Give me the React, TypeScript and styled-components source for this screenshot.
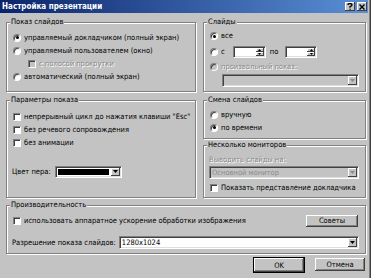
import React, { FC, ReactNode } from 'react';
import styled, { createGlobalStyle } from 'styled-components';

const FACE = '#c3c3c3';
const SHADOW = '#808080';
const DARK = '#404040';
const LIGHT = '#ffffff';

const GlobalStyle = createGlobalStyle`
  html, body {
    margin: 0;
    padding: 0;
    background: ${FACE};
  }
  body {
    color: #000;
    font-family: "DejaVu Sans Condensed", "Liberation Sans", Arial, sans-serif;
    font-size: 7.5px;
  }
`;

const Window = styled.div`
  background: ${FACE};
  box-shadow: inset -1px 0 0 ${DARK}, inset -2px 0 0 ${SHADOW};
  box-sizing: border-box;
  height: 278px;
  overflow: hidden;
  width: 371px;
`;

const TitleBar = styled.div`
  align-items: center;
  background: linear-gradient(to right, #0a246a, #5a8fd6);
  display: flex;
  height: 13px;
  margin-right: 3px;
  padding: 0 1px 0 2px;
`;

const Title = styled.span`
  color: #fff;
  flex: 1;
  font-size: 8px;
  font-weight: bold;
  line-height: 13px;
`;

const CaptionButton = styled.div`
  align-items: center;
  background: ${FACE};
  box-shadow: inset -1px -1px 0 ${DARK}, inset 1px 1px 0 ${LIGHT};
  display: flex;
  height: 9px;
  justify-content: center;
  margin-left: 2px;
  width: 10px;
`;

const Body = styled.div`
  display: flex;
  flex-direction: column;
  padding: 4px 5px 0 6px;
`;

const Columns = styled.div`
  column-gap: 7px;
  display: grid;
  grid-template-columns: 190px 1fr;
  grid-template-rows: 75px 103px;
  row-gap: 3px;
`;

const Stack = styled.div`
  display: flex;
  flex-direction: column;
  gap: 1px;
`;

const Group = styled.fieldset<{ $pad?: string; $height?: number; $grow?: boolean }>`
  border: 1px solid ${SHADOW};
  box-shadow: inset 1px 1px 0 ${LIGHT}, 1px 1px 0 ${LIGHT};
  box-sizing: border-box;
  display: flex;
  flex: ${(p) => (p.$grow ? 1 : 'none')};
  flex-direction: column;
  height: ${(p) => (p.$height ? `${p.$height}px` : 'auto')};
  margin: 0;
  min-width: 0;
  padding: ${(p) => p.$pad ?? '4px 6px 0 6px'};
`;

const Legend = styled.legend`
  background: ${FACE};
  height: 10px;
  line-height: 10px;
  margin-left: -3px;
  padding: 0 1px;
`;

const Row = styled.div<{ $h?: number; $mt?: number; $indent?: number }>`
  align-items: center;
  display: flex;
  height: ${(p) => p.$h ?? 13}px;
  margin-top: ${(p) => p.$mt ?? 0}px;
  padding-left: ${(p) => p.$indent ?? 0}px;
  white-space: nowrap;
`;

const Text = styled.span<{ $disabled?: boolean; $ml?: number }>`
  color: ${(p) => (p.$disabled ? '#8a8a8a' : '#000')};
  line-height: 10px;
  margin-left: ${(p) => p.$ml ?? 0}px;
  text-shadow: ${(p) => (p.$disabled ? `1px 1px 0 ${LIGHT}` : 'none')};
`;

const RadioDot = styled.span<{ $checked?: boolean; $disabled?: boolean }>`
  align-items: center;
  background: ${(p) => (p.$disabled ? FACE : LIGHT)};
  border: 1px solid;
  border-color: ${SHADOW} ${LIGHT} ${LIGHT} ${SHADOW};
  border-radius: 50%;
  box-shadow: inset 1px 1px 0 ${DARK};
  box-sizing: border-box;
  display: flex;
  flex: none;
  height: 8px;
  justify-content: center;
  margin-right: 3px;
  width: 8px;

  &::after {
    background: #000;
    border-radius: 50%;
    content: '';
    display: ${(p) => (p.$checked ? 'block' : 'none')};
    height: 3px;
    width: 3px;
  }
`;

const CheckBox = styled.span<{ $disabled?: boolean }>`
  background: ${(p) => (p.$disabled ? FACE : LIGHT)};
  border: 1px solid;
  border-color: ${SHADOW} ${LIGHT} ${LIGHT} ${SHADOW};
  box-shadow: inset 1px 1px 0 ${DARK};
  box-sizing: border-box;
  flex: none;
  height: 8px;
  margin-right: 3px;
  width: 8px;
`;

const Sunken = styled.div<{ $w?: number; $h?: number; $ml?: number; $disabled?: boolean }>`
  background: ${(p) => (p.$disabled ? FACE : LIGHT)};
  border: 1px solid;
  border-color: ${SHADOW} ${LIGHT} ${LIGHT} ${SHADOW};
  box-shadow: inset 1px 1px 0 ${DARK}, inset -1px -1px 0 #dedede;
  box-sizing: border-box;
  display: flex;
  flex: ${(p) => (p.$w ? 'none' : 1)};
  height: ${(p) => p.$h ?? 13}px;
  margin-left: ${(p) => p.$ml ?? 0}px;
  padding: 1px;
  width: ${(p) => (p.$w ? `${p.$w}px` : 'auto')};
`;

const FieldValue = styled.span<{ $disabled?: boolean }>`
  color: ${(p) => (p.$disabled ? '#8a8a8a' : '#000')};
  flex: 1;
  line-height: 9px;
  overflow: hidden;
  padding-left: 1px;
  white-space: nowrap;
`;

const Swatch = styled.span<{ $color: string }>`
  background: ${(p) => p.$color};
  flex: 1;
  margin: 1px 2px 1px 1px;
`;

const ArrowBox = styled.span`
  align-items: center;
  background: ${FACE};
  box-shadow: inset -1px -1px 0 ${DARK}, inset 1px 1px 0 ${LIGHT};
  display: flex;
  flex: none;
  justify-content: center;
  width: 9px;
`;

const SpinColumn = styled.span`
  display: flex;
  flex: none;
  flex-direction: column;
  margin-left: auto;
  width: 8px;
`;

const SpinButton = styled.span`
  align-items: center;
  background: ${FACE};
  box-shadow: inset -1px -1px 0 ${DARK}, inset 1px 1px 0 ${LIGHT};
  display: flex;
  flex: 1;
  justify-content: center;
`;

const Button = styled.div<{ $default?: boolean; $w?: number }>`
  align-items: center;
  background: ${FACE};
  border: 1px solid ${(p) => (p.$default ? '#000' : 'transparent')};
  box-shadow: inset -1px -1px 0 ${DARK}, inset 1px 1px 0 ${LIGHT}, inset -2px -2px 0 ${SHADOW};
  box-sizing: border-box;
  display: flex;
  height: ${(p) => (p.$default ? 16 : 15)}px;
  justify-content: center;
  width: ${(p) => p.$w ?? 52}px;
`;

const ButtonBar = styled.div`
  display: flex;
  gap: 9px;
  justify-content: flex-end;
  margin-top: 3px;
`;

const Triangle: FC<{ up?: boolean; color?: string; w?: number }> = ({ up, color = '#000', w = 5 }) => (
  <svg width={w} height={Math.ceil(w / 2)} viewBox={`0 0 ${w} ${Math.ceil(w / 2)}`}>
    <polygon
      points={up ? `0,${Math.ceil(w / 2)} ${w},${Math.ceil(w / 2)} ${w / 2},0` : `0,0 ${w},0 ${w / 2},${Math.ceil(w / 2)}`}
      fill={color}
    />
  </svg>
);

const Radio: FC<{ checked?: boolean; disabled?: boolean; children?: ReactNode }> = ({ checked, disabled, children }) => (
  <>
    <RadioDot $checked={checked} $disabled={disabled} />
    <Text $disabled={disabled}>{children}</Text>
  </>
);

const Check: FC<{ disabled?: boolean; children: ReactNode }> = ({ disabled, children }) => (
  <>
    <CheckBox $disabled={disabled} />
    <Text $disabled={disabled}>{children}</Text>
  </>
);

const Spin: FC<{ w: number; ml: number }> = ({ w, ml }) => (
  <Sunken $w={w} $h={12} $ml={ml}>
    <SpinColumn>
      <SpinButton>
        <Triangle up w={3} />
      </SpinButton>
      <SpinButton>
        <Triangle w={3} />
      </SpinButton>
    </SpinColumn>
  </Sunken>
);

const ComboArrow: FC<{ disabled?: boolean }> = ({ disabled }) => (
  <ArrowBox>
    <Triangle color={disabled ? '#8a8a8a' : '#000'} />
  </ArrowBox>
);

const App: FC = () => (
  <>
    <GlobalStyle />
    <Window>
      <TitleBar>
        <Title>Настройка презентации</Title>
        <CaptionButton>
          <svg width="6" height="7" viewBox="0 0 6 7">
            <path d="M1 2 Q1 0.5 3 0.5 Q5 0.5 5 2 Q5 3 3 3.7 L3 4.8 M3 5.8 L3 6.8" stroke="#000" strokeWidth="1.3" fill="none" />
          </svg>
        </CaptionButton>
        <CaptionButton>
          <svg width="6" height="6" viewBox="0 0 6 6">
            <path d="M0.5 0.5 L5.5 5.5 M5.5 0.5 L0.5 5.5" stroke="#000" strokeWidth="1.4" />
          </svg>
        </CaptionButton>
      </TitleBar>

      <Body>
        <Columns>
          <Group>
            <Legend>Показ слайдов</Legend>
            <Row>
              <Radio checked>управляемый докладчиком (полный экран)</Radio>
            </Row>
            <Row>
              <Radio>управляемый пользователем (окно)</Radio>
            </Row>
            <Row $indent={15}>
              <Check disabled>с полосой прокрутки</Check>
            </Row>
            <Row>
              <Radio>автоматический (полный экран)</Radio>
            </Row>
          </Group>

          <Group $pad="3px 6px 0 6px">
            <Legend>Слайды</Legend>
            <Row $h={12}>
              <Radio checked>все</Radio>
            </Row>
            <Row $mt={3}>
              <Radio>с</Radio>
              <Spin w={33} ml={8} />
              <Text $ml={4}>по</Text>
              <Spin w={32} ml={7} />
            </Row>
            <Row $mt={2}>
              <Radio disabled>произвольный показ:</Radio>
            </Row>
            <Row $mt={1} $indent={12}>
              <Sunken $disabled>
                <FieldValue />
                <ComboArrow disabled />
              </Sunken>
            </Row>
          </Group>

          <Group $pad="5px 6px 0 6px">
            <Legend>Параметры показа</Legend>
            <Row>
              <Check>непрерывный цикл до нажатия клавиши "Esc"</Check>
            </Row>
            <Row>
              <Check>без речевого сопровождения</Check>
            </Row>
            <Row>
              <Check>без анимации</Check>
            </Row>
            <Row $mt={16}>
              <Text $ml={-1}>Цвет пера:</Text>
              <Sunken $w={67} $h={12} $ml={4}>
                <Swatch $color="#000" />
                <ComboArrow />
              </Sunken>
            </Row>
          </Group>

          <Stack>
            <Group $pad="3px 6px 0 6px" $height={44}>
              <Legend>Смена слайдов</Legend>
              <Row>
                <Radio>вручную</Radio>
              </Row>
              <Row>
                <Radio checked>по времени</Radio>
              </Row>
            </Group>
            <Group $pad="4px 6px 0 6px" $grow>
              <Legend>Несколько мониторов</Legend>
              <Row $h={12}>
                <Text $disabled $ml={-1}>Выводить слайды на:</Text>
              </Row>
              <Row>
                <Sunken $disabled $ml={-1}>
                  <FieldValue $disabled>Основной монитор</FieldValue>
                  <ComboArrow disabled />
                </Sunken>
              </Row>
              <Row $mt={2}>
                <Check>Показать представление докладчика</Check>
              </Row>
            </Group>
          </Stack>
        </Columns>

        <Group $pad="3px 6px 0 6px" $height={54} style={{ marginTop: 2 }}>
          <Legend>Производительность</Legend>
          <Row $h={15}>
            <Check>использовать аппаратное ускорение обработки изображения</Check>
            <Button $w={54} style={{ marginLeft: 'auto', height: 14 }}>
              Советы
            </Button>
          </Row>
          <Row $mt={8}>
            <Text $ml={-1}>Разрешение показа слайдов:</Text>
            <Sunken $ml={3}>
              <FieldValue>1280x1024</FieldValue>
              <ComboArrow />
            </Sunken>
          </Row>
        </Group>

        <ButtonBar>
          <Button $default>OK</Button>
          <Button>Отмена</Button>
        </ButtonBar>
      </Body>
    </Window>
  </>
);

export default App;
